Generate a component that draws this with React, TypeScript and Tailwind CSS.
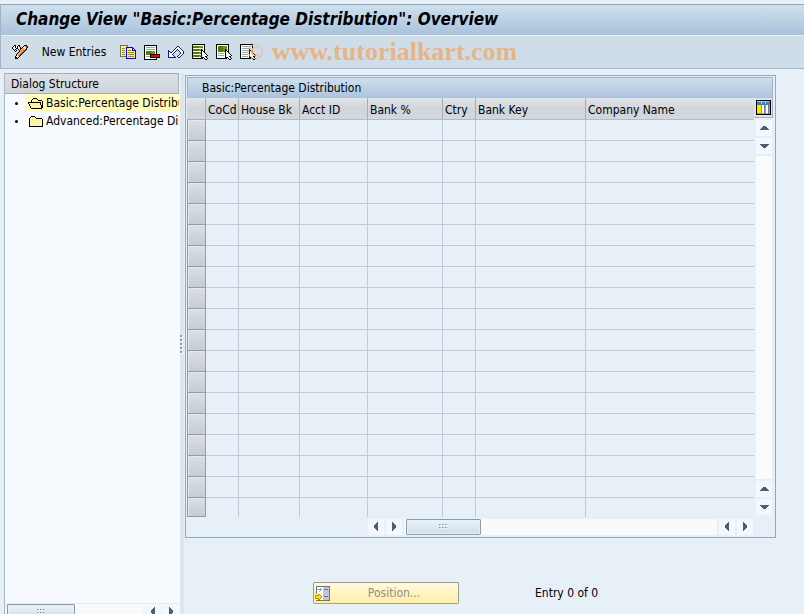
import { useState } from "react";
import type { ReactNode } from "react";
import clsx from "clsx";

const palette: Record<string, string> = {
  K: "#000000",
  W: "#ffffff",
  G: "#4f7d00",
  g: "#8fae3c",
  L: "#8fa9b5",
  Y: "#fff17a",
  D: "#7a7440",
  d: "#8f8a50",
  B: "#0000ee",
  N: "#15158c",
  R: "#f00000",
  O: "#f59a2c",
  o: "#ffc46e",
  r: "#a8501c",
  w: "#f4e4d0",
  F: "#fff3a8",
  T: "#3b7fc4",
  t: "#8fd0f4",
  Q: "#ffe600",
  q: "#b89a00",
  P: "#c4c4dc",
  M: "#6c7484",
};

const icons = {
  edit: [
    "..KK..KK....KKK.",
    ".K.KWK.K...KooRK",
    "KWWKWKWWK.KwWorK",
    "K.W.KKW.KKoOwWK.",
    ".K.K..KWKoOOOrK.",
    "..K.K..KoOOOrK..",
    "...K...KOOOrK...",
    "......KoOOrK....",
    ".....KoOOrK.....",
    "....KoOOrK......",
    "....KwOrK.......",
    "...KwwwK........",
    "...KKwK.........",
    "...KKK..........",
  ],
  copy: [
    "DDDDDDDD........",
    "DYYYYYYD........",
    "DYYYYYBBBBBBB...",
    "DYdddYBYYYYYBB..",
    "DYYYYYBYYYYYBWB.",
    "DYdddYBYdddYBBBB",
    "DYYYYYBYYYYYYYYB",
    "DYdddYBYddddddYB",
    "DYYYYYBYYYYYYYYB",
    "DYdddYBYddddddYB",
    "DYYYYYBYYYYYYYYB",
    "DDDDDDBYddddddYB",
    "......BYYYYYYYYB",
    "......BBBBBBBBBB",
  ],
  remove: [
    "KKKKKKKKKKKKK...",
    "KWWWWWWWWWWWK...",
    "KWLLLLLLLLLWK...",
    "KWWWWWWWWWWWK...",
    "KWLLLLLLLLLWK...",
    "KWWWWWWWWWWWK...",
    "KWGGGGGGgGgWK...",
    "KWGGGGGgGgGWK...",
    "KWGGGGGGgGgWK...",
    "KWGGGGKKKKKKKKKK",
    "KWWWWWKRRRRRRRRK",
    "KWLLLLKRRRRRRRRK",
    "KWWWWWKKKKKKKKKK",
    "KWWWWWWWWWWWK...",
    "KKKKKKKKKKKKK...",
  ],
  undo: [
    ".........NN.....",
    "........NWWN....",
    ".......NWWWWN...",
    "......NWWNWWWN..",
    "N....NWWN.NWWWN.",
    "NN..NWWN...NWWWN",
    "NWNNWWN.....NWWN",
    "NWWWWN......NWWN",
    "NWWWN......NWWN.",
    "NWWWWN....NWWN..",
    "NWWWWWN..NWWN...",
    "NNNNNNNN..NN....",
  ],
  selectAll: [
    "KKKKKKKKKKKKK...",
    "KWWWWWWWWWWWK...",
    "KGGGGGGGgGgWK...",
    "KGGGGGGgGgGWK...",
    "KWWWWWWWWWWWK...",
    "KGGGGGGGgKgWK...",
    "KGGGGGGgGKKWK...",
    "KWWWWWWWWKWKK...",
    "KGGGGGGGgKWWK...",
    "KGGGGGGgGKWWWK..",
    "KWWWWWWWWKWWWWK.",
    "KGGGGGGGgKWWWWWK",
    "KGGGGGGgGKWWWKK.",
    "KWWWWWWWWKKKWWK.",
    "KKKKKKKKKKK.KWWK",
    ".............KK.",
  ],
  selectBlock: [
    "KKKKKKKKKKKKK...",
    "KWWWWWWWWWWWK...",
    "KWGGGGGGgGgWK...",
    "KWGGGGGgGgGWK...",
    "KWGGGGGGgGgWK...",
    "KWGGGGGgGKGWK...",
    "KWGGGGGGgKKWK...",
    "KWGGGGGgGKWKK...",
    "KWWWWWWWWKWWK...",
    "KWLLLLLLWKWWWK..",
    "KWWWWWWWWKWWWWK.",
    "KWLLLLLLWKWWWWWK",
    "KWWWWWWWWKWWWKK.",
    "KWWWWWWWWKKKWWK.",
    "KKKKKKKKKKK.KWWK",
    ".............KK.",
  ],
  deselectAll: [
    "KKKKKKKKKKKKK...",
    "KWWWWWWWWWWWK...",
    "KWLLLLLLLLLWK...",
    "KWWWWWWWWWWWK...",
    "KWLLLLLLLLLWK...",
    "KWWWWWWWWKWWK...",
    "KWLLLLLLWKKWK...",
    "KWWWWWWWWKWKK...",
    "KWLLLLLLWKWWK...",
    "KWWWWWWWWKWWWK..",
    "KWLLLLLLWKWWWWK.",
    "KWWWWWWWWKWWWWWK",
    "KWLLLLLLWKWWWKK.",
    "KWWWWWWWWKKKWWK.",
    "KKKKKKKKKKK.KWWK",
    ".............KK.",
  ],
  folderOpen: [
    ".....KKKK......",
    "....KFFFFK.....",
    "...KFFFFFFKKKK.",
    "...KFFFFFFFFFFK",
    "KKKKKKKKKKKKKFK",
    "KFFFFFFFFFFFKFK",
    ".KFFFFFFFFFFKFK",
    ".KFFFFFFFFFFFKK",
    "..KFFFFFFFFFFKK",
    "..KFFFFFFFFFFKK",
    "...KKKKKKKKKKK.",
  ],
  folderClosed: [
    "..KKKK........",
    ".KFFFFK.......",
    "KFFFFFFKKKKKK.",
    "KFFFFFFFFFFFFK",
    "KFFFFFFFFFFFFK",
    "KFFFFFFFFFFFFK",
    "KFFFFFFFFFFFFK",
    "KFFFFFFFFFFFFK",
    "KFFFFFFFFFFFFK",
    "KFFFFFFFFFFFFK",
    "KKKKKKKKKKKKKK",
  ],
  columns: [
    "KKKKKKKKKKKKKKK",
    "KttttttttttttTK",
    "KTTTTtTTTtTTTTK",
    "KTTTTtTTTtTTTTK",
    "KTTTTTTTTTTTTTK",
    "KQQQQqWWMLWWMLK",
    "KQQQQqWWMLWWMLK",
    "KQQQQqWWMLWWMLK",
    "KQQQQqWWMLWWMLK",
    "KQQQQqWWMLWWMLK",
    "KQQQQqWWMLWWMLK",
    "KQQQQqWWMLWWMLK",
    "KQQQQqWWMLWWMLK",
    "KqqqqqLLMLLLMLK",
    "KKKKKKKKKKKKKKK",
  ],
  position: [
    ".MMMMMMMMMMMMMM",
    ".MWWWWWWPPPPPPM",
    ".MWWWLWWPPPPPPM",
    ".MLLLLLWPMMMMPM",
    ".MWWWLWWPPPPPPM",
    ".MWWLWWWPPPPPPM",
    ".MWWWWWWPPPPPPM",
    ".MWWWWWWPPPPPPM",
    "...qq.WWPPPPPPM",
    "qqqqQqWWPPPPPPM",
    "qQQQQQqWPMMMMPM",
    "qQQQQQqWPPPPPPM",
    "qqqqQqWWPPPPPPM",
    "...qqWWWPPPPPPM",
    ".MMMMMMMMMMMMMM",
  ],
};

function PixelIcon({ name }: { name: keyof typeof icons }) {
  const rows = icons[name];
  return (
    <svg
      width={rows[0].length}
      height={rows.length}
      shapeRendering="crispEdges"
      aria-hidden="true"
      className="shrink-0"
    >
      {rows.flatMap((row, y) =>
        [...row].map((c, x) =>
          palette[c] ? (
            <rect
              key={`${x}-${y}`}
              x={x}
              y={y}
              width={1}
              height={1}
              fill={palette[c]}
            />
          ) : null,
        ),
      )}
    </svg>
  );
}

const arrowPaths = {
  up: "M4 10h9v-1h-1v-1h-1v-1h-1v-1h-3v1h-1v1h-1v1h-1z",
  down: "M4 6h9v1h-1v1h-1v1h-1v1h-3v-1h-1v-1h-1v-1h-1z",
  left: "M10 3v9h-1v-1h-1v-1h-1v-1h-1v-3h1v-1h1v-1h1v-1z",
  right: "M6 3v9h1v-1h1v-1h1v-1h1v-3h-1v-1h-1v-1h-1v-1z",
};

function ArrowButton({
  dir,
  label,
}: {
  dir: keyof typeof arrowPaths;
  label: string;
}) {
  return (
    <button
      type="button"
      aria-label={label}
      className="size-4 shrink-0 bg-[#f4f8fc]"
    >
      <svg width="16" height="16" shapeRendering="crispEdges">
        <path d={arrowPaths[dir]} fill="#4c606e" />
      </svg>
    </button>
  );
}

function Thumb({ className }: { className?: string }) {
  return (
    <div
      className={clsx(
        "flex h-4 shrink-0 items-center justify-center rounded-[1px] border border-[#8e9ba8] bg-linear-to-b from-[#eaf2f8] to-[#cfdfea] shadow-[inset_0_0_0_1px_#e6eff6]",
        className,
      )}
    >
      <svg width="9" height="6" shapeRendering="crispEdges">
        {[0, 3, 6].map((x) => (
          <g key={x}>
            <path d={`M${x + 1} 1h1v1h-1zM${x + 1} 4h1v1h-1z`} fill="#fff" />
            <path d={`M${x} 0h1v1h-1zM${x} 3h1v1h-1z`} fill="#7d92a5" />
            <path d={`M${x + 1} 0h1v1h-1zM${x + 1} 3h1v1h-1z`} fill="#a9bac8" />
          </g>
        ))}
      </svg>
    </div>
  );
}

function ToolButton({ label, children }: { label: string; children: ReactNode }) {
  return (
    <button
      type="button"
      aria-label={label}
      title={label}
      className="flex size-4 shrink-0 items-center justify-center"
    >
      {children}
    </button>
  );
}

const treeNodes = [
  { id: "basic", label: "Basic:Percentage Distribution" },
  { id: "advanced", label: "Advanced:Percentage Distribution" },
];

const columns = [
  { label: "CoCd", width: "w-[33px]" },
  { label: "House Bk", width: "w-[61px]" },
  { label: "Acct ID", width: "w-[68px]" },
  { label: "Bank %", width: "w-[75px]" },
  { label: "Ctry", width: "w-[33px]" },
  { label: "Bank Key", width: "w-[110px]" },
  { label: "Company Name", width: "" },
];

const emptyRows = Array.from({ length: 19 }, (_, i) => i);

function DialogStructure() {
  const [open, setOpen] = useState("basic");
  return (
    <aside className="flex w-[176px] shrink-0 flex-col overflow-hidden border-l border-[#a9b8c6] bg-[#f7fbff] pr-px">
      <h2 className="h-[21px] shrink-0 border border-l-0 border-[#a3adba] bg-linear-to-b from-[#dde1e6] to-[#cfd4d9] pl-1.5 leading-5">
        Dialog Structure
      </h2>
      <ul className="flex-1">
        {treeNodes.map((node) => (
          <li key={node.id} className="flex h-[18px] items-center">
            <span className="mr-2 ml-[10px] size-[3px] shrink-0 rounded-full bg-black" />
            <button
              type="button"
              onClick={() => setOpen(node.id)}
              className={clsx(
                "flex h-full min-w-0 flex-1 items-center gap-[3px] overflow-hidden whitespace-nowrap",
                open === node.id && "bg-[#fffcbe]",
              )}
            >
              <span className="flex w-[17px] shrink-0 justify-end">
                <PixelIcon
                  name={open === node.id ? "folderOpen" : "folderClosed"}
                />
              </span>
              {node.label}
            </button>
          </li>
        ))}
      </ul>
      <div className="flex h-[11px] shrink-0 gap-0.5 overflow-hidden border-t border-[#e3eaf0] bg-[#eff4f8] pl-0.5">
        <div className="flex h-4 flex-1 bg-[#fafafa]">
          <Thumb className="w-[68px]" />
        </div>
        <ArrowButton dir="left" label="Scroll tree left" />
        <ArrowButton dir="right" label="Scroll tree right" />
      </div>
    </aside>
  );
}

function Splitter() {
  return (
    <div className="flex w-1 shrink-0 flex-col items-start justify-center gap-0.5 bg-[#dce6ed]">
      {[0, 1, 2, 3, 4].map((i) => (
        <span
          key={i}
          className="size-0.5 bg-[#8b9baa] shadow-[1px_1px_0_#ffffff]"
        />
      ))}
    </div>
  );
}

function Grid() {
  return (
    <table className="w-full table-fixed border-separate border-spacing-0">
      <colgroup>
        <col className="w-[19px]" />
        {columns.map((c) => (
          <col key={c.label} className={c.width} />
        ))}
      </colgroup>
      <thead>
        <tr className="h-[22px] bg-linear-to-b from-[#e2e5e9] via-[#d0d5da] to-[#d3d8dc]">
          <th
            aria-label="Row selection"
            className="border-r border-b border-[#a5aeba] p-0"
          />
          {columns.map((c, i) => (
            <th
              key={c.label}
              scope="col"
              className={clsx(
                "overflow-visible border-b border-b-[#b3bbc6] p-0 pt-0.5 pl-0.5 text-left font-normal whitespace-nowrap",
                i < columns.length - 1 && "border-r border-r-[#a5aeba]",
              )}
            >
              {c.label}
            </th>
          ))}
        </tr>
      </thead>
      <tbody>
        {emptyRows.map((row) => (
          <tr key={row} className="group h-[21px] last:h-[19px]">
            <td className="border-x border-b border-[#929dab] bg-linear-to-b from-[#dbdfe5] to-[#c6ccd5] p-0 shadow-[inset_1px_1px_0_#e4e8ed]" />
            {columns.map((c, i) => (
              <td
                key={c.label}
                className={clsx(
                  "border-b border-[#bfc9d8] p-0 group-last:border-b-0",
                  i < columns.length - 1 && "border-r",
                )}
              />
            ))}
          </tr>
        ))}
      </tbody>
    </table>
  );
}

function TablePanel() {
  return (
    <section className="border border-[#8fa9c4] p-px pb-0.5">
      <h2 className="mr-px h-[21px] border border-b-0 border-[#9db3c9] bg-linear-to-b from-[#cfe0ee] to-[#abc3dc] pl-3.5 leading-5">
        Basic:Percentage Distribution
      </h2>
      <div className="flex">
        <div className="min-w-0 flex-1">
          <Grid />
        </div>
        <div className="mr-px flex w-[19px] shrink-0 flex-col items-center gap-0.5 pb-0.5">
          <button
            type="button"
            aria-label="Configure columns"
            className="flex h-5 w-full items-center justify-center border-r border-b border-[#a5aeba] bg-[#dde2e6]"
          >
            <PixelIcon name="columns" />
          </button>
          <ArrowButton dir="up" label="Scroll up" />
          <ArrowButton dir="down" label="Scroll down" />
          <div className="w-4 flex-1 bg-[#fafbfc]" />
          <ArrowButton dir="up" label="Previous row" />
          <ArrowButton dir="down" label="Next row" />
        </div>
      </div>
      <div className="mt-0.5 mr-[21px] flex gap-0.5 pl-[181px]">
        <ArrowButton dir="left" label="Scroll left" />
        <ArrowButton dir="right" label="Scroll right" />
        <div className="flex flex-1 bg-[#fafafa] pl-0.5">
          <Thumb className="w-[75px]" />
        </div>
        <ArrowButton dir="left" label="Previous column" />
        <ArrowButton dir="right" label="Next column" />
      </div>
    </section>
  );
}

export default function App() {
  return (
    <div className="flex h-screen flex-col overflow-hidden bg-[#e8f0f7] pt-1 font-['DejaVu_Sans_Condensed','DejaVu_Sans',sans-serif] text-[12px] leading-4 text-black">
      <header className="shrink-0 border-l border-[#a3b4c8]">
        <h1 className="h-8 border-t border-b border-t-[#8fa5bd] border-b-[#e8f0f7] bg-linear-to-b from-[#cfe0ec] to-[#a9c2dc] pl-[15px] text-[17px] leading-7 font-bold italic">
          Change View "Basic:Percentage Distribution": Overview
        </h1>
        <div className="relative flex h-[33px] items-center border-b border-[#a5b5cb] bg-[#cfdde8] pl-[11px]">
          <ToolButton label="Display / Change">
            <PixelIcon name="edit" />
          </ToolButton>
          <button type="button" className="mx-3 w-[68px] text-center whitespace-nowrap">
            New Entries
          </button>
          <div className="flex gap-2">
            <ToolButton label="Copy As">
              <PixelIcon name="copy" />
            </ToolButton>
            <ToolButton label="Delete">
              <PixelIcon name="remove" />
            </ToolButton>
            <ToolButton label="Undo Change">
              <PixelIcon name="undo" />
            </ToolButton>
            <ToolButton label="Select All">
              <PixelIcon name="selectAll" />
            </ToolButton>
            <ToolButton label="Select Block">
              <PixelIcon name="selectBlock" />
            </ToolButton>
            <ToolButton label="Deselect All">
              <PixelIcon name="deselectAll" />
            </ToolButton>
          </div>
          <p className="pointer-events-none absolute inset-y-0 left-[246px] flex items-center gap-2 font-['Liberation_Serif',serif] text-[26px] font-bold whitespace-nowrap text-[#e6b587]">
            <span className="text-[22px] font-normal">©</span>
            www.tutorialkart.com
          </p>
        </div>
      </header>

      <div className="flex min-h-0 flex-1 pt-1 pl-1">
        <DialogStructure />
        <Splitter />
        <main className="min-w-0 flex-1 pt-0.5 pr-7 pl-px">
          <TablePanel />
          <footer className="mt-11 flex items-center gap-[76px] pl-32">
            <button
              type="button"
              className="flex h-[22px] w-[146px] items-center rounded-[2px] border border-[#9a9a94] border-b-[#b5a65a] bg-linear-to-b from-[#fffbe0] via-[#fff3c0] to-[#fdeeb0] pl-px text-[#8f8f86]"
            >
              <PixelIcon name="position" />
              <span className="flex-1 text-center">Position...</span>
            </button>
            <p>Entry 0 of 0</p>
          </footer>
        </main>
      </div>
    </div>
  );
}
